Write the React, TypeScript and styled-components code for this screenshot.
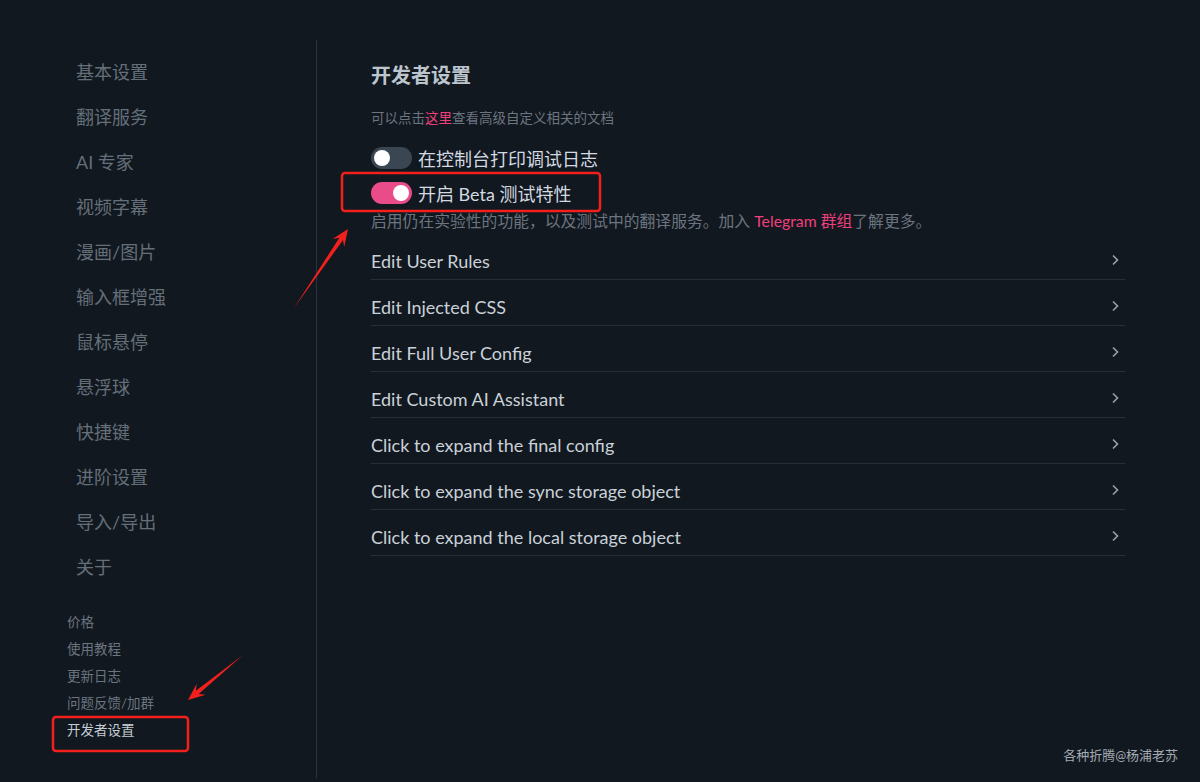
import React from "react";
import styled, { createGlobalStyle } from "styled-components";

const Global = createGlobalStyle`
  html, body { margin: 0; padding: 0; background: #12181f; }
  body { font-family: Lato, "Noto Sans CJK SC", sans-serif; }
  * { box-sizing: border-box; }
`;

const Page = styled.div`
  position: relative;
  width: 1200px;
  height: 782px;
  background: #12181f;
  padding-top: 40px;
  display: flex;
  overflow: hidden;
`;

const Sidebar = styled.aside`
  width: 317px;
  height: 738px;
  border-right: 1px solid #2a3440;
  padding-top: 10px;
  display: flex;
  flex-direction: column;
`;

const NavList = styled.nav`
  display: flex;
  flex-direction: column;
  padding-left: 76px;
`;

const NavItem = styled.a`
  font-size: 18px;
  line-height: 45px;
  height: 45px;
  color: #646f7a;
  text-decoration: none;
`;

const SubList = styled.div`
  display: flex;
  flex-direction: column;
  padding-left: 67px;
  margin-top: 19px;
`;

const SubItem = styled.a<{ $active?: boolean }>`
  font-size: 13.5px;
  line-height: 27px;
  height: 27px;
  color: ${(p) => (p.$active ? "#c4ccd4" : "#6b7580")};
  text-decoration: none;
`;

const Main = styled.main`
  flex: 1;
  padding-left: 54px;
  padding-right: 75px;
  padding-top: 21px;
  display: flex;
  flex-direction: column;
`;

const Title = styled.h2`
  margin: 0;
  font-size: 20px;
  line-height: 28px;
  font-weight: 700;
  color: #bcc5ce;
`;

const Hint = styled.p`
  margin: 19px 0 0;
  font-size: 13.5px;
  line-height: 20px;
  color: #6b7580;
`;

const Pink = styled.span`
  color: #ef3f7c;
`;

const ToggleRow = styled.label`
  display: flex;
  align-items: center;
  gap: 6px;
  height: 35px;
  font-size: 18px;
  color: #d3dae1;
`;

const Switch = styled.span<{ $on?: boolean }>`
  position: relative;
  width: 41px;
  height: 22px;
  border-radius: 11px;
  background: ${(p) => (p.$on ? "#ea4c89" : "#3a4651")};
  flex: none;
  &::after {
    content: "";
    position: absolute;
    top: 3px;
    left: ${(p) => (p.$on ? "22px" : "3px")};
    width: 16px;
    height: 16px;
    border-radius: 50%;
    background: #ffffff;
  }
`;

const ToggleGroup = styled.div`
  display: flex;
  flex-direction: column;
  margin-top: 12px;
`;

const BetaNote = styled.p`
  margin: 1px 0 0;
  font-size: 15.8px;
  line-height: 20px;
  color: #6b7580;
`;

const List = styled.div`
  display: flex;
  flex-direction: column;
  margin-top: 3px;
`;

const Row = styled.div`
  display: flex;
  align-items: center;
  justify-content: space-between;
  padding: 15px 0 6px;
  line-height: 24px;
  border-bottom: 1px solid #262f39;
  font-size: 18px;
  color: #c9d1d9;
`;

const Chevron = styled.svg`
  width: 8px;
  height: 12px;
  margin-right: 6px;
  margin-top: -2px;
`;

const Watermark = styled.div`
  position: absolute;
  right: 22px;
  bottom: 18px;
  font-size: 13px;
  color: #a3abb3;
`;

const Overlay = styled.svg`
  position: absolute;
  left: 0;
  top: 0;
  pointer-events: none;
`;

function arrow(tx: number, ty: number, hx: number, hy: number) {
  const dx = hx - tx;
  const dy = hy - ty;
  const len = Math.hypot(dx, dy);
  const ux = dx / len;
  const uy = dy / len;
  const nx = -uy;
  const ny = ux;
  const headLen = 17;
  const headW = 7;
  const shaftW = 2.2;
  const bx = hx - ux * headLen;
  const by = hy - uy * headLen;
  const nxp = hx - ux * (headLen - 5);
  const nyp = hy - uy * (headLen - 5);
  const pts = [
    [tx, ty],
    [nxp + nx * shaftW, nyp + ny * shaftW],
    [bx + nx * headW, by + ny * headW],
    [hx, hy],
    [bx - nx * headW, by - ny * headW],
    [nxp - nx * shaftW, nyp - ny * shaftW],
  ];
  return pts.map((p) => `${p[0].toFixed(1)},${p[1].toFixed(1)}`).join(" ");
}

const navItems = [
  "基本设置",
  "翻译服务",
  "AI 专家",
  "视频字幕",
  "漫画/图片",
  "输入框增强",
  "鼠标悬停",
  "悬浮球",
  "快捷键",
  "进阶设置",
  "导入/导出",
  "关于",
];

const subItems = ["价格", "使用教程", "更新日志", "问题反馈/加群", "开发者设置"];

const rows = [
  "Edit User Rules",
  "Edit Injected CSS",
  "Edit Full User Config",
  "Edit Custom AI Assistant",
  "Click to expand the final config",
  "Click to expand the sync storage object",
  "Click to expand the local storage object",
];

export default function App() {
  return (
    <>
      <Global />
      <Page>
        <Sidebar>
          <NavList>
            {navItems.map((n) => (
              <NavItem key={n}>{n}</NavItem>
            ))}
          </NavList>
          <SubList>
            {subItems.map((s) => (
              <SubItem key={s} $active={s === "开发者设置"}>
                {s}
              </SubItem>
            ))}
          </SubList>
        </Sidebar>
        <Main>
          <Title>开发者设置</Title>
          <Hint>
            可以点击<Pink>这里</Pink>查看高级自定义相关的文档
          </Hint>
          <ToggleGroup>
            <ToggleRow>
              <Switch />
              在控制台打印调试日志
            </ToggleRow>
            <ToggleRow>
              <Switch $on />
              开启 Beta 测试特性
            </ToggleRow>
          </ToggleGroup>
          <BetaNote>
            启用仍在实验性的功能，以及测试中的翻译服务。加入 <Pink>Telegram 群组</Pink>了解更多。
          </BetaNote>
          <List>
            {rows.map((r) => (
              <Row key={r}>
                <span>{r}</span>
                <Chevron viewBox="0 0 8 12">
                  <path d="M2 1.5 L6.5 6 L2 10.5" fill="none" stroke="#9aa3ad" strokeWidth="1.6" />
                </Chevron>
              </Row>
            ))}
          </List>
        </Main>
        <Watermark>各种折腾@杨浦老苏</Watermark>
        <Overlay width="1200" height="782" viewBox="0 0 1200 782">
          <rect x="342" y="173" width="258" height="38" rx="3" fill="none" stroke="#f2201c" strokeWidth="2.5" />
          <rect x="53" y="717" width="135" height="34" rx="3" fill="none" stroke="#f2201c" strokeWidth="2.5" />
          <polygon points={arrow(294, 308, 348, 229)} fill="#f2201c" />
          <polygon points={arrow(243, 655, 188, 700)} fill="#f2201c" />
        </Overlay>
      </Page>
    </>
  );
}
